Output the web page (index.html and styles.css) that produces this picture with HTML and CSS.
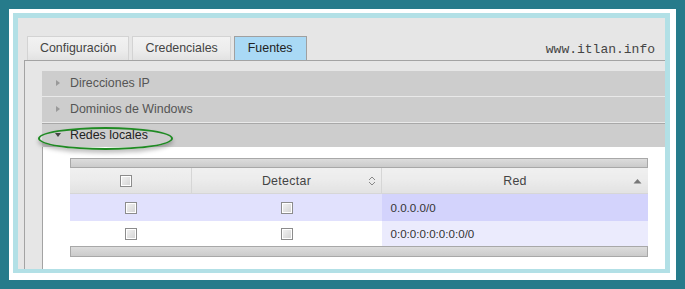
FILE: index.html
```html
<!doctype html>
<html lang="es">
<head>
    <title>Fuentes</title>
    <meta charset="utf-8">
    <link rel="stylesheet" href="styles.css">
</head>
<body>
<div class="frame">
    <div class="page">
        <div class="tab-bar">
            <div class="tab">Configuración</div>
            <div class="tab">Credenciales</div>
            <div class="tab active">Fuentes</div>
            <span class="site">www.itlan.info</span>
        </div>
        <div class="panel">
            <div class="acc-head"><span class="arrow"></span>Direcciones IP</div>
            <div class="acc-head"><span class="arrow"></span>Dominios de Windows</div>
            <div class="acc-head open"><span class="arrow"></span>Redes locales<span class="mark"></span></div>
            <div class="acc-body">
                <div class="grid">
                    <div class="grid-bar"></div>
                    <table>
                        <thead>
                        <tr>
                            <th class="c1"><span class="cb cb-head"></span></th>
                            <th class="c2">Detectar
                                <svg class="sort" width="8" height="10" viewBox="0 0 8 10"><path d="M1 4 L4 1 L7 4 M1 6 L4 9 L7 6" fill="none" stroke="#888" stroke-width="1"/></svg>
                            </th>
                            <th class="c3">Red
                                <svg class="sort up" width="9" height="6" viewBox="0 0 9 6"><path d="M0.5 5.5 L4.5 1 L8.5 5.5 Z" fill="#777"/></svg>
                            </th>
                        </tr>
                        </thead>
                        <tbody>
                        <tr class="odd">
                            <td><span class="cb"></span></td>
                            <td><span class="cb"></span></td>
                            <td class="net">0.0.0.0/0</td>
                        </tr>
                        <tr class="even">
                            <td><span class="cb"></span></td>
                            <td><span class="cb"></span></td>
                            <td class="net">0:0:0:0:0:0:0:0/0</td>
                        </tr>
                        </tbody>
                    </table>
                    <div class="grid-bar bottom"></div>
                </div>
            </div>
        </div>
    </div>
</div>
</body>
</html>
```

FILE: styles.css
```css
html, body { height: 100%; }
body {
    margin: 0;
    background: #267b8b;
    font-family: "Liberation Sans", Arial, sans-serif;
    font-size: 12.4px;
    color: #333;
}
.frame {
    width: 667px;
    height: 271px;
    margin: 9px;
    padding: 4px 6px 7px 4px;
    background: #fff;
    box-sizing: border-box;
}
.page {
    height: 100%;
    border: 5px solid #b2e0e6;
    border-bottom-width: 4px;
    background: #e6e6e6;
    box-sizing: border-box;
    display: flex;
    flex-direction: column;
    overflow: hidden;
}
.tab-bar {
    display: flex;
    align-items: flex-end;
    gap: 3px;
    margin: 18px 0 0 6px;
    padding-left: 3px;
    border-bottom: 1px solid #a3a3a3;
}
.tab {
    height: 23px;
    line-height: 23px;
    padding: 0 12px;
    border: 1px solid #d3d3d3;
    border-bottom: none;
    background: linear-gradient(#f2f2f2, #ececec 60%, #e2e2e2);
    color: #444;
}
.tab.active {
    background: #a9d9f5;
    border-color: #a0a0a0;
    color: #222;
    padding: 0 13px;
}
.site {
    margin-left: auto;
    margin-right: 10px;
    align-self: center;
    margin-top: 2px;
    font-family: "Liberation Mono", "Courier New", monospace;
    font-size: 13px;
    color: #444;
}
.panel {
    flex: 1;
    margin-left: 6px;
    border-left: 1px solid #a3a3a3;
    padding: 10px 0 0 17px;
    display: flex;
    flex-direction: column;
}
.acc-head {
    position: relative;
    height: 25px;
    line-height: 25px;
    padding-left: 28px;
    background: #cdcdcd;
    color: #555;
    border-bottom: 1px solid #e9e9e9;
}
.acc-head.open {
    height: 23px;
    line-height: 23px;
    color: #222;
    border-top: 1px solid #a8a8a8;
    border-bottom: none;
}
.arrow {
    position: absolute;
    left: 14px;
    top: 9px;
    width: 0;
    height: 0;
    border-top: 3.5px solid transparent;
    border-bottom: 3.5px solid transparent;
    border-left: 4px solid #999;
}
.open .arrow {
    left: 13px;
    top: 9px;
    border-left: 3.5px solid transparent;
    border-right: 3.5px solid transparent;
    border-top: 4px solid #444;
    border-bottom: none;
}
.mark {
    position: absolute;
    left: -4px;
    top: 3px;
    width: 131px;
    height: 19px;
    border: 2px solid #1f8a23;
    border-radius: 50%;
    box-shadow: 0 3px 4px rgba(0, 0, 0, .25);
}
.acc-body {
    flex: 1;
    background: #fff;
    border-left: 1px solid #a3a3a3;
    padding: 11px 0 0 27px;
}
.grid { width: 578px; }
.grid-bar {
    height: 8px;
    border: 1px solid #a8a8a8;
    background: linear-gradient(#dcdcdc, #cbcbcb);
}
.grid-bar.bottom { height: 9px; }
table {
    width: 578px;
    border-collapse: collapse;
    table-layout: fixed;
}
th {
    position: relative;
    height: 25px;
    padding: 0;
    font-weight: normal;
    color: #444;
    background: linear-gradient(#f0f0f0, #ececec 45%, #e2e2e2);
    border-right: 1px solid #d6d6d6;
    border-bottom: 1px solid #d6d6d6;
    text-align: center;
    letter-spacing: .3px;
}
th:last-child { border-right: none; }
.c1 { width: 121px; }
.c2 { width: 189px; }
.sort {
    position: absolute;
    right: 5px;
    top: 8px;
}
.sort.up { right: 6px; top: 10px; }
td {
    padding: 0;
    text-align: center;
}
tr.odd td { height: 27px; background: #e1e1fd; }
tr.even td { height: 25px; background: #fff; }
tr.odd td.net { background: #d3d3fc; }
tr.even td.net { background: #ebebfd; }
td.net {
    text-align: left;
    padding-left: 9px;
    font-size: 11.6px;
    color: #333;
}
.cb {
    display: inline-block;
    vertical-align: middle;
    width: 10px;
    height: 10px;
    border: 1px solid #8c8c8c;
    background: linear-gradient(135deg, #f4f4f4, #d2d2d2);
    box-shadow: inset 0 0 0 1px #fff;
    margin-left: 1px;
}
.cb-head { margin-left: -10px; }
```
